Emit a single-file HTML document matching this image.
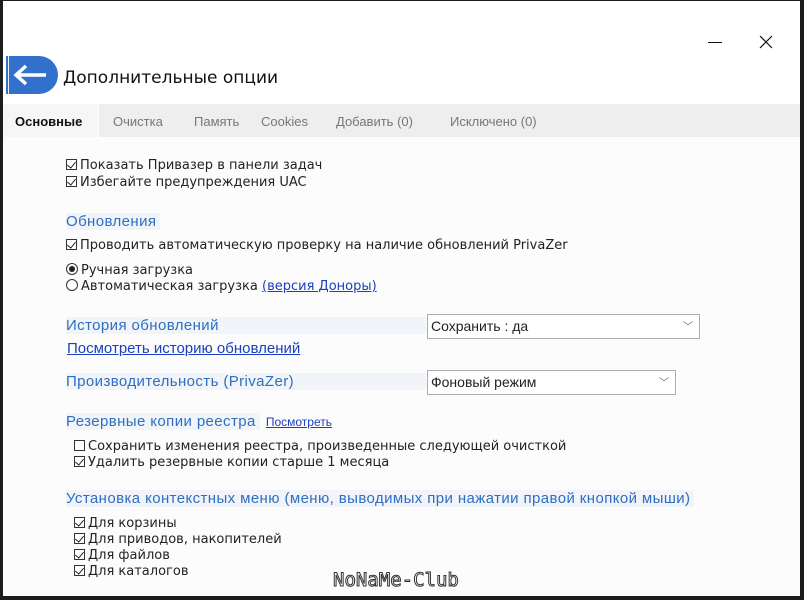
<!DOCTYPE html>
<html><head><meta charset="utf-8"><style>
*{margin:0;padding:0;box-sizing:border-box}
body{width:804px;height:600px;background:#1c1c1c;position:relative;overflow:hidden;font-family:"DejaVu Sans","Liberation Sans",sans-serif;font-size:13px;color:#222}
#win{position:absolute;left:3px;top:1px;width:797px;height:595px;background:#fcfcfc}
#top{position:absolute;left:0;top:0;width:797px;height:103px;background:#fff}
.a{position:absolute;white-space:nowrap}
.b{margin-top:1px}
.tab{position:absolute;top:113px;color:#777;font-size:13px;font-family:"Liberation Sans",sans-serif}
.cb{display:inline-block;width:11px;height:11px;border:1px solid #333;vertical-align:-1px;margin-right:3px;position:relative;background:#fff}
.cb.c::after{content:"";position:absolute;left:2px;top:0px;width:4px;height:7px;border:solid #222;border-width:0 1.3px 1.3px 0;transform:rotate(40deg)}
.rb{display:inline-block;width:12px;height:12px;border:1px solid #333;border-radius:50%;vertical-align:-1px;margin-right:3px;position:relative;background:#fff}
.rb.c::after{content:"";position:absolute;left:2px;top:2px;width:6px;height:6px;border-radius:50%;background:#222}
.h{color:#2f6fbf;font-size:15px;letter-spacing:0.4px;font-family:"Liberation Sans",sans-serif;background:#f1f4f9;padding-right:4px}
.lnk{color:#1a3fbf;text-decoration:underline}
.sel{position:absolute;height:25px;border:1px solid #adadad;background:#fff;font-size:14px;padding:3px 3px;color:#222;font-family:"Liberation Sans",sans-serif}
.sel span{position:absolute;right:6px;top:3px;font-size:10px;color:#666}
</style></head><body>
<div id="win">
<div id="top"></div>
<div class="a" style="left:3px;top:55px;width:52px;height:38px;background:#3370cc;border-radius:0 20px 20px 0"></div>
<div class="a" style="left:5px;top:55px;width:1px;height:38px;background:#e8eefc"></div>
<svg class="a" style="left:9px;top:62px" width="36" height="24"><path d="M4 12H34M14 3L4 12L14 21" stroke="#fff" stroke-width="3.5" fill="none"/></svg>
<div class="a" style="left:60px;top:67px;font-size:17px;color:#111">Дополнительные опции</div>
<div class="a" style="left:705px;top:41px;width:14px;height:1px;background:#111"></div>
<svg class="a" style="left:756px;top:34px" width="14" height="14"><path d="M1 1L13 13M13 1L1 13" stroke="#111" stroke-width="1.2"/></svg>
<div class="a" style="left:0;top:103px;width:797px;height:33px;background:#eeeeee"></div>
<div class="a" style="left:0;top:103px;width:96px;height:33px;background:#f6f6f6;border-right:1px solid #fff"></div>
<div class="tab" style="left:12px;color:#111;font-weight:bold">Основные</div>
<div class="tab" style="left:110px">Очистка</div>
<div class="tab" style="left:191px">Память</div>
<div class="tab" style="left:258px">Cookies</div>
<div class="tab" style="left:333px">Добавить (0)</div>
<div class="tab" style="left:447px">Исключено (0)</div>

<div class="a" style="left:63px;top:157px"><span class="cb c"></span>Показать Привазер в панели задач</div>
<div class="a" style="left:63px;top:174px"><span class="cb c"></span>Избегайте предупреждения UAC</div>
<div class="a" style="left:63px;top:212px"><span class="h">Обновления</span></div>
<div class="a" style="left:63px;top:237px"><span class="cb c"></span>Проводить автоматическую проверку на наличие обновлений PrivaZer</div>
<div class="a" style="left:63px;top:262px"><span class="rb c"></span>Ручная загрузка</div>
<div class="a" style="left:63px;top:278px"><span class="rb"></span>Автоматическая загрузка <span class="lnk">(версия Доноры)</span></div>

<div class="a" style="left:63px;top:316px"><span class="h" style="display:inline-block;width:360px">История обновлений</span></div>
<div class="sel" style="left:424px;top:313px;width:273px">Сохранить : да<span>﹀</span></div>
<div class="a" style="left:64px;top:339px;font-size:15px;font-family:'Liberation Sans',sans-serif"><span class="lnk">Посмотреть историю обновлений</span></div>

<div class="a" style="left:63px;top:372px"><span class="h" style="display:inline-block;width:360px">Производительность (PrivaZer)</span></div>
<div class="sel" style="left:424px;top:369px;width:249px">Фоновый режим<span>﹀</span></div>

<div class="a" style="left:63px;top:412px"><span class="h">Резервные копии реестра</span> <span class="lnk" style="font-size:12px;margin-left:2px;font-family:'Liberation Sans',sans-serif">Посмотреть</span></div>
<div class="a" style="left:71px;top:438px"><span class="cb"></span>Сохранить изменения реестра, произведенные следующей очисткой</div>
<div class="a" style="left:71px;top:454px"><span class="cb c"></span>Удалить резервные копии старше 1 месяца</div>

<div class="a" style="left:63px;top:489px"><span class="h">Установка контекстных меню (меню, выводимых при нажатии правой кнопкой мыши)</span></div>
<div class="a" style="left:71px;top:515px"><span class="cb c"></span>Для корзины</div>
<div class="a" style="left:71px;top:531px"><span class="cb c"></span>Для приводов, накопителей</div>
<div class="a" style="left:71px;top:547px"><span class="cb c"></span>Для файлов</div>
<div class="a" style="left:71px;top:563px"><span class="cb c"></span>Для каталогов</div>
<div class="a" style="left:330px;top:568px;font-size:19px;color:#fff;-webkit-text-stroke:1px #333;font-family:'DejaVu Sans Mono',monospace">NoNaMe-Club</div>
</div>
</body></html>
